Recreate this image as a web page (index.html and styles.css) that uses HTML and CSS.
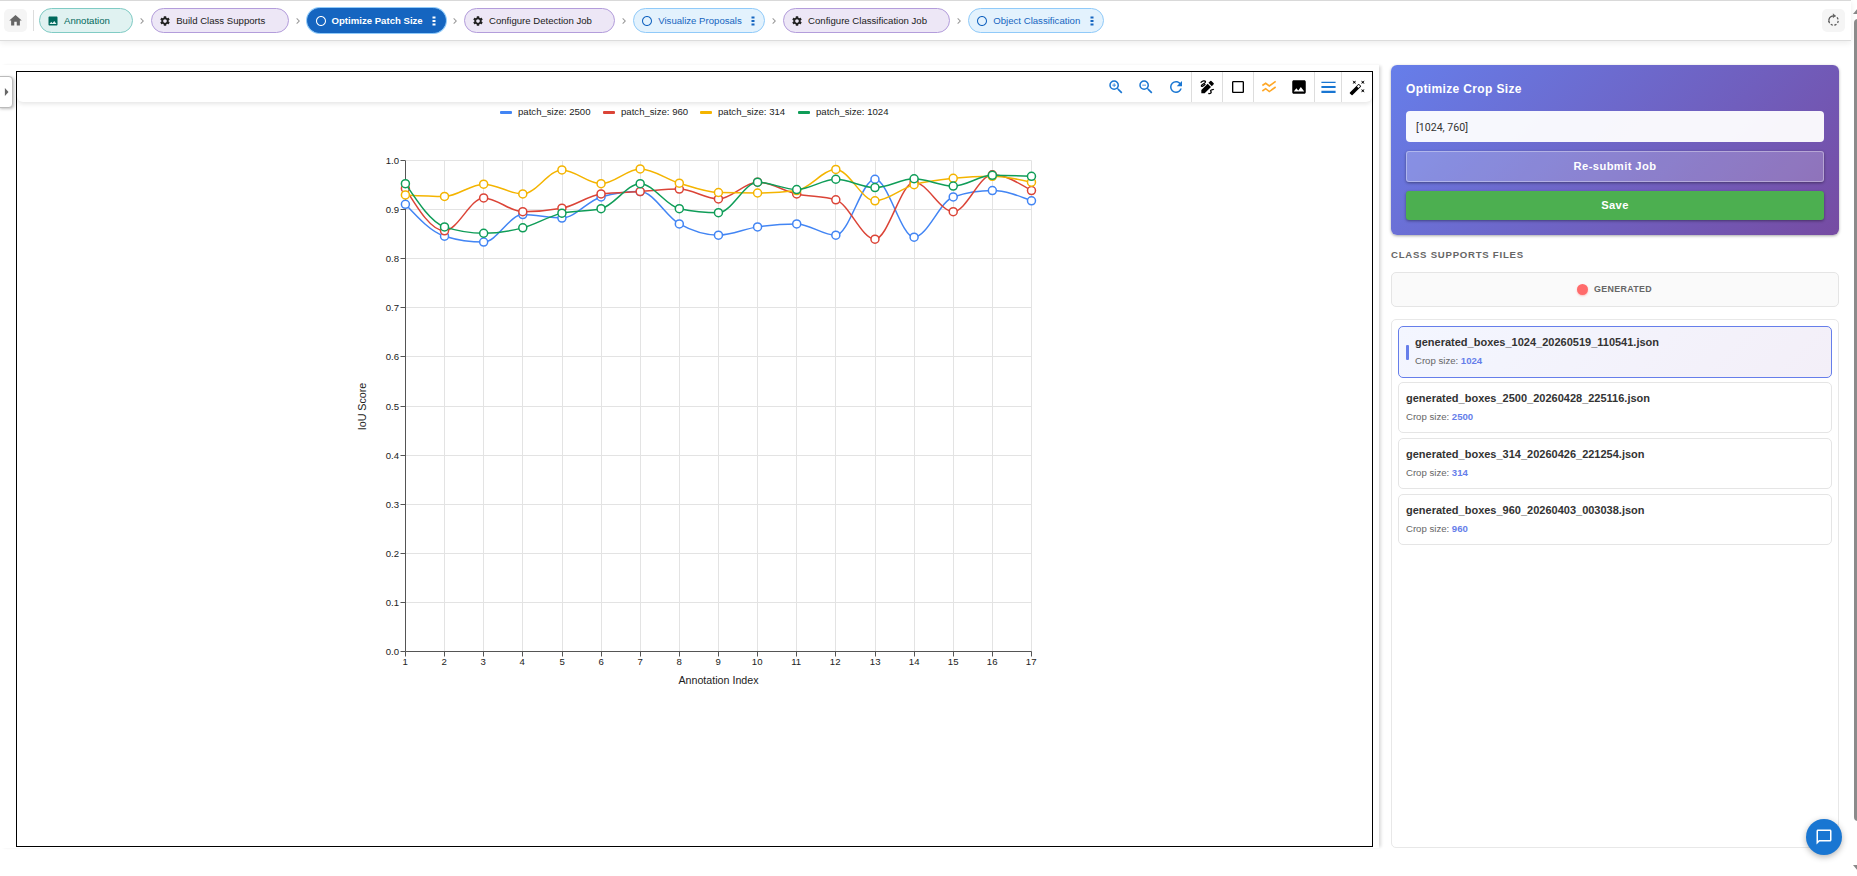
FILE: index.html
```
<!DOCTYPE html>
<html lang="en">
<head>
  <meta charset="UTF-8">
  <title>Optimize Patch Size</title>
  <link rel="stylesheet" href="styles.css">
</head>
<body>
  <!-- shared icons -->
  <svg class="sprite">
    <symbol id="i-gear" viewBox="0 0 24 24"><path d="M19.14 12.94c.04-.3.06-.61.06-.94 0-.32-.02-.64-.07-.94l2.03-1.58c.18-.14.23-.41.12-.61l-1.92-3.32c-.12-.22-.37-.29-.59-.22l-2.39.96c-.5-.38-1.03-.7-1.62-.94L14.4 2.81c-.04-.24-.24-.41-.48-.41h-3.84c-.24 0-.43.17-.47.41l-.36 2.54c-.59.24-1.13.57-1.62.94l-2.39-.96c-.22-.08-.47 0-.59.22L2.74 8.87c-.12.21-.08.47.12.61l2.03 1.58c-.05.3-.09.63-.09.94s.02.64.07.94l-2.03 1.58c-.18.14-.23.41-.12.61l1.92 3.32c.12.22.37.29.59.22l2.39-.96c.5.38 1.03.7 1.62.94l.36 2.54c.05.24.24.41.48.41h3.84c.24 0 .44-.17.47-.41l.36-2.54c.59-.24 1.13-.56 1.62-.94l2.39.96c.22.08.47 0 .59-.22l1.92-3.32c.12-.22.07-.47-.12-.61l-2.01-1.58zM12 15.6c-1.98 0-3.6-1.62-3.6-3.6s1.62-3.6 3.6-3.6 3.6 1.62 3.6 3.6-1.62 3.6-3.6 3.6z"/></symbol>
    <symbol id="i-circle" viewBox="0 0 24 24"><path d="M12 2C6.48 2 2 6.48 2 12s4.48 10 10 10 10-4.48 10-10S17.52 2 12 2zm0 18c-4.42 0-8-3.58-8-8s3.58-8 8-8 8 3.58 8 8-3.58 8-8 8z"/></symbol>
    <symbol id="i-image" viewBox="0 0 24 24"><path d="M21 19V5c0-1.1-.9-2-2-2H5c-1.1 0-2 .9-2 2v14c0 1.1.9 2 2 2h14c1.1 0 2-.9 2-2zM8.5 13.5l2.5 3.01L14.5 12l4.5 6H5l3.5-4.5z"/></symbol>
    <symbol id="i-dots" viewBox="0 0 4 12"><path d="M.5 1.500h3v2h-3zM.5 5h3v2h-3zM.5 8.500h3v2h-3z"/></symbol>
    <symbol id="i-chevron" viewBox="0 0 24 24"><path d="M10 6 8.59 7.41 13.17 12l-4.58 4.59L10 18l6-6z"/></symbol>
  </svg>

  <header class="topbar">
    <button class="icon-btn"><svg viewBox="0 0 24 24"><path d="M10 20v-6h4v6h5v-8h3L12 3 2 12h3v8z"/></svg></button>
    <span class="topbar-divider"></span>
    <nav class="steps">
      <a class="step step-annotation"><svg><use href="#i-image"/></svg><span>Annotation</span></a>
      <svg class="chevron"><use href="#i-chevron"/></svg>
      <a class="step step-job"><svg><use href="#i-gear"/></svg><span>Build Class Supports</span></a>
      <svg class="chevron"><use href="#i-chevron"/></svg>
      <a class="step step-active"><svg class="ring"><use href="#i-circle"/></svg><span>Optimize Patch Size</span><svg class="dots"><use href="#i-dots"/></svg></a>
      <svg class="chevron"><use href="#i-chevron"/></svg>
      <a class="step step-job"><svg><use href="#i-gear"/></svg><span>Configure Detection Job</span></a>
      <svg class="chevron"><use href="#i-chevron"/></svg>
      <a class="step step-view"><svg class="ring"><use href="#i-circle"/></svg><span>Visualize Proposals</span><svg class="dots"><use href="#i-dots"/></svg></a>
      <svg class="chevron"><use href="#i-chevron"/></svg>
      <a class="step step-job"><svg><use href="#i-gear"/></svg><span>Configure Classification Job</span></a>
      <svg class="chevron"><use href="#i-chevron"/></svg>
      <a class="step step-view"><svg class="ring"><use href="#i-circle"/></svg><span>Object Classification</span><svg class="dots"><use href="#i-dots"/></svg></a>
    </nav>
    <button class="icon-btn reload"><svg viewBox="0 0 24 24"><path class="dash" d="M12 4.5a7.5 7.5 0 1 1-7.2 5.4"/><path class="arc" d="M4.7 14a7.5 7.5 0 0 1 7.3-9.5"/><path d="M11 .5v8l4.5-4z"/></svg></button>
  </header>

  <button class="drawer-toggle"><svg viewBox="0 0 6 10"><path d="M1 0l4.500 5L1 10z"/></svg></button>

  <main class="workspace">
    <section class="viewer">
      <div class="viewer-frame">
        <div class="toolbar">
          <div class="tool-group blue">
            <svg viewBox="0 0 24 24"><path d="M15.5,14L20.5,19L19,20.5L14,15.5V14.71L13.73,14.43C12.59,15.41 11.11,16 9.5,16A6.5,6.5 0 0,1 3,9.5A6.5,6.5 0 0,1 9.5,3A6.5,6.5 0 0,1 16,9.5C16,11.11 15.41,12.59 14.43,13.73L14.71,14H15.5M9.5,14C12,14 14,12 14,9.5C14,7 12,5 9.5,5C7,5 5,7 5,9.5C5,12 7,14 9.5,14M12,10H10V12H9V10H7V9H9V7H10V9H12V10Z"/></svg>
            <svg viewBox="0 0 24 24"><path d="M15.5,14H14.71L14.43,13.73C15.41,12.59 16,11.11 16,9.5A6.5,6.5 0 0,0 9.5,3A6.5,6.5 0 0,0 3,9.5A6.5,6.5 0 0,0 9.5,16C11.11,16 12.59,15.41 13.73,14.43L14,14.71V15.5L19,20.5L20.5,19L15.5,14M9.5,14C7,14 5,12 5,9.5C5,7 7,5 9.5,5C12,5 14,7 14,9.5C14,12 12,14 9.5,14M7,9H12V10H7V9Z"/></svg>
            <svg viewBox="0 0 24 24"><path d="M17.65,6.35C16.2,4.9 14.21,4 12,4A8,8 0 0,0 4,12A8,8 0 0,0 12,20C15.73,20 18.84,17.45 19.73,14H17.65C16.83,16.33 14.61,18 12,18A6,6 0 0,1 6,12A6,6 0 0,1 12,6C13.66,6 15.14,6.69 16.22,7.78L13,11H20V4L17.65,6.35Z"/></svg>
          </div>
          <div class="tool-group">
            <svg viewBox="0 0 24 24"><path d="M3.500 21.500v-5L13 7l5 5-9.500 9.500zM14.200 5.800 17 3q.8-.8 1.600 0L22 6.400q.8.800 0 1.600l-2.800 2.800z"/><path class="squiggle" d="M2.500 5.500C5 2.500 9 1.800 9.800 4S3 8 3.500 10.300 7.500 9.500 9.500 7.500M14 21.500c2 .8 4.300.2 4.300-1.500s-2-2.500.2-3.500 2.500 0 3.500-1.500"/></svg>
          </div>
          <div class="tool-group">
            <svg viewBox="0 0 24 24"><path d="M19 3H5c-1.100 0-2 .9-2 2v14c0 1.100.9 2 2 2h14c1.100 0 2-.9 2-2V5c0-1.100-.9-2-2-2zm0 16H5V5h14z"/></svg>
          </div>
          <div class="tool-group wide">
            <svg viewBox="0 0 24 24"><path class="waves" d="M2 9.800 7 6.500 12.500 10.500 22 3.500M2 18l5-3.500 5.500 4.300L22 12"/></svg>
            <svg class="image-tool"><use href="#i-image"/></svg>
          </div>
          <div class="tool-group lines">
            <svg viewBox="0 0 24 24"><path d="M2 4h20v1.800H2zM2 10h20v2.800H2zM2 16.500h20v3.300H2z"/></svg>
          </div>
          <div class="tool-group wand">
            <svg viewBox="0 0 24 24"><path d="M7.5,5.6L5,7L6.4,4.5L5,2L7.5,3.4L10,2L8.6,4.5L10,7L7.5,5.6M19.5,15.4L22,14L20.6,16.5L22,19L19.5,17.6L17,19L18.4,16.5L17,14L19.5,15.4M22,2L20.6,4.5L22,7L19.5,5.6L17,7L18.4,4.5L17,2L19.5,3.4L22,2M13.34,12.78L15.78,10.34L13.66,8.22L11.22,10.66L13.34,12.78M14.37,7.29L16.71,9.63C17.1,10 17.1,10.65 16.71,11.04L5.04,22.71C4.65,23.1 4,23.1 3.63,22.71L1.29,20.37C0.9,20 0.9,19.35 1.29,18.96L12.96,7.29C13.35,6.9 14,6.9 14.37,7.29Z"/></svg>
          </div>
        </div>
        <svg id="chart" class="chart" viewBox="0 0 1355 744"></svg>
      </div>
    </section>

    <aside class="sidebar">
      <div class="crop-card">
        <h2>Optimize Crop Size</h2>
        <input type="text" value="[1024, 760]">
        <button class="btn btn-resubmit">Re-submit Job</button>
        <button class="btn btn-save">Save</button>
      </div>
      <h3>Class Supports Files</h3>
      <div class="tab"><span class="tab-dot"></span>GENERATED</div>
      <div class="file-list">
        <div class="file selected">
          <div class="file-name">generated_boxes_1024_20260519_110541.json</div>
          <div class="file-meta">Crop size: <b>1024</b></div>
        </div>
        <div class="file">
          <div class="file-name">generated_boxes_2500_20260428_225116.json</div>
          <div class="file-meta">Crop size: <b>2500</b></div>
        </div>
        <div class="file">
          <div class="file-name">generated_boxes_314_20260426_221254.json</div>
          <div class="file-meta">Crop size: <b>314</b></div>
        </div>
        <div class="file">
          <div class="file-name">generated_boxes_960_20260403_003038.json</div>
          <div class="file-meta">Crop size: <b>960</b></div>
        </div>
      </div>
    </aside>
  </main>

  <button class="chat-fab"><svg viewBox="0 0 24 24"><path d="M20 2H4c-1.100 0-2 .9-2 2v18l4-4h14c1.100 0 2-.9 2-2V4c0-1.100-.9-2-2-2zm0 14H5.200L4 17.200V4h16z"/></svg></button>

  <div class="scrollbar">
    <svg viewBox="0 0 10 6"><path d="M5 0l5 6H0z"/></svg>
    <span class="thumb"></span>
    <svg viewBox="0 0 10 6"><path d="M0 0h10L5 6z"/></svg>
  </div>

  <script src="chart.js"></script>
</body>
</html>
```
FILE: styles.css
```
* {
  box-sizing: border-box;
}

body, html {
  margin: 0;
  padding: 0;
  height: 100%;
  overflow: hidden;
}

body {
  display: flex;
  flex-direction: column;
  background-color: #fff;
  font-family: "Liberation Sans", Arial, sans-serif;
  color: #212121;
}

svg {
  fill: currentColor;
  flex: none;
}

.sprite {
  display: none;
}

button {
  border: none;
  padding: 0;
  font-family: inherit;
}

/* top bar */
.topbar {
  flex: none;
  height: 41px;
  margin-right: 6px;
  padding: 0 6px 0 4px;
  display: flex;
  align-items: center;
  border-top: 1px solid #d9d9d9;
  border-bottom: 1px solid #dcdcdc;
  box-shadow: 0 2px 6px rgba(0, 0, 0, 0.08);
}

.icon-btn {
  width: 23px;
  height: 23px;
  display: flex;
  align-items: center;
  justify-content: center;
  border-radius: 5px;
  background-color: #f5f5f5;
  color: #666;
}

.icon-btn svg {
  width: 15px;
  height: 15px;
}

.reload {
  margin-left: auto;
}

.reload .dash, .reload .arc {
  fill: none;
  stroke: #555;
  stroke-width: 2;
}

.reload .dash {
  stroke-dasharray: 3.5 2.5;
}

.topbar-divider {
  width: 1px;
  height: 21px;
  margin: 0 5px 0 6px;
  background-color: #ddd;
}

.steps {
  display: flex;
  align-items: center;
}

.step {
  height: 25px;
  padding: 0 22.3px 0 7px;
  display: flex;
  align-items: center;
  border: 1px solid;
  border-radius: 13px;
  font-size: 9.6px;
  white-space: nowrap;
  position: relative;
}

.step svg {
  width: 12px;
  height: 12px;
  margin-right: 5px;
}

.step span {
  margin-bottom: 1px;
}

.step .dots {
  position: absolute;
  right: 9px;
  top: 6px;
  width: 4px;
  height: 12px;
  margin: 0;
}

.step-annotation {
  background-color: #e0f2f1;
  border-color: #80cbc4;
  color: #00695c;
}

.step-job {
  background-color: #ede7f6;
  border-color: #b39ddb;
  color: #212121;
}

.step-view {
  background-color: #e3f2fd;
  border-color: #90caf9;
  color: #1565c0;
}

.step-active {
  background-color: #1565c0;
  border-color: #1565c0;
  color: #fff;
  font-weight: bold;
  box-shadow: 0 0 0 1px #90caf9;
}

.chevron {
  width: 12px;
  height: 12px;
  margin: 0 3px;
  color: #999;
}

.drawer-toggle {
  position: absolute;
  left: -1px;
  top: 76px;
  width: 14px;
  height: 32px;
  display: flex;
  align-items: center;
  justify-content: center;
  background-color: #fff;
  border: 1px solid #bbb;
  border-radius: 0 4px 4px 0;
  box-shadow: 1px 1px 3px rgba(0, 0, 0, 0.25);
  color: #666;
}

.drawer-toggle svg {
  width: 5px;
  height: 8px;
}

/* workspace */
.workspace {
  flex: 1;
  min-height: 0;
  padding: 24px 18px 28px 0;
  display: flex;
  gap: 12px;
}

.viewer {
  flex: 1;
  padding: 6px 6px 1px 16px;
  box-shadow: 3px 0 3px -1px rgba(0, 0, 0, 0.15);
}

.viewer-frame {
  height: 100%;
  display: flex;
  flex-direction: column;
  border: 1px solid #000;
}

.toolbar {
  flex: none;
  height: 30px;
  display: flex;
  justify-content: flex-end;
  border-radius: 6px;
  box-shadow: 0 2px 4px rgba(0, 0, 0, 0.1);
}

.tool-group {
  width: 31px;
  display: flex;
  align-items: center;
  justify-content: center;
  border-left: 1px solid #ddd;
  color: #000;
}

.tool-group svg {
  width: 16px;
  height: 16px;
}

.tool-group.blue {
  width: 91px;
  gap: 12px;
  border-left: none;
  color: #1976d2;
}

.tool-group.blue svg, .tool-group .image-tool {
  width: 18px;
  height: 18px;
}

.tool-group.wide {
  width: 61px;
  gap: 13px;
}

.tool-group.lines {
  width: 27px;
  color: #1976d2;
}

.tool-group.lines svg, .tool-group.wand svg {
  width: 17px;
  height: 17px;
}

.squiggle {
  fill: none;
  stroke: #000;
  stroke-width: 2;
}

.waves {
  fill: none;
  stroke: #ffa726;
  stroke-width: 2.4;
}

/* chart */
.chart {
  width: 100%;
  height: 744px;
  font-size: 9.6px;
}

.chart text {
  fill: #222;
}

.chart .grid {
  stroke: #e3e3e3;
}

.chart .axis {
  stroke: #555;
}

.chart .axis-name {
  font-size: 10.7px;
}

.chart .series {
  fill: none;
  stroke-width: 1.5;
}

.chart .marker {
  fill: #fff;
  stroke-width: 1.5;
}

/* sidebar */
.sidebar {
  width: 448px;
  display: flex;
  flex-direction: column;
}

.crop-card {
  height: 170px;
  padding: 15px;
  display: flex;
  flex-direction: column;
  gap: 9px;
  border-radius: 6px;
  background: linear-gradient(135deg, #667eea 0%, #764ba2 100%);
  box-shadow: 0 1px 3px rgba(0, 0, 0, 0.35);
}

.crop-card h2 {
  margin: 0 0 6px;
  height: 16px;
  line-height: 18px;
  font-size: 12px;
  letter-spacing: 0.36px;
  color: #fff;
}

.crop-card input {
  height: 31px;
  padding: 2px 10px 0;
  border: none;
  border-radius: 4px;
  background-color: rgba(255, 255, 255, 0.95);
  font-family: Roboto, sans-serif;
  font-size: 10.6px;
  color: #333;
}

.btn {
  padding-bottom: 2px;
  border-radius: 3px;
  font-size: 11.2px;
  font-weight: bold;
  letter-spacing: 0.4px;
  color: #fff;
  box-shadow: 0 1px 3px rgba(0, 0, 0, 0.4);
}

.btn-resubmit {
  height: 31px;
  background-color: rgba(255, 255, 255, 0.2);
  border: 1px solid rgba(255, 255, 255, 0.35);
}

.btn-save {
  height: 29px;
  background-color: #4caf50;
}

.sidebar h3 {
  margin: 12px 0 10px;
  line-height: 15px;
  font-size: 9.6px;
  letter-spacing: 0.75px;
  text-transform: uppercase;
  color: #666;
}

.tab {
  height: 35px;
  padding: 0 1px 2px 0;
  display: flex;
  align-items: center;
  justify-content: center;
  gap: 6px;
  border: 1px solid #e5e5e5;
  border-radius: 5px;
  background-color: #fafafa;
  font-size: 8.9px;
  font-weight: bold;
  letter-spacing: 0.3px;
  color: #666;
}

.tab-dot {
  width: 11px;
  height: 11px;
  margin-top: 2px;
  border-radius: 50%;
  background-color: #ff6b6b;
  box-shadow: 0 1px 2px rgba(255, 107, 107, 0.4);
}

.file-list {
  flex: 1;
  margin-top: 12px;
  padding: 6px;
  display: flex;
  flex-direction: column;
  gap: 4.3px;
  border: 1px solid #e8e8e8;
  border-radius: 5px;
}

.file {
  height: 51.6px;
  padding: 8px 7px;
  border: 1px solid #e5e5e5;
  border-radius: 5px;
  position: relative;
}

.file-name {
  line-height: 15px;
  font-size: 11px;
  font-weight: bold;
  color: #333;
}

.file-meta {
  margin-top: 4px;
  line-height: 14px;
  font-size: 9.6px;
  color: #666;
}

.file-meta b {
  color: #667eea;
}

.file.selected {
  padding-left: 16px;
  border-color: #667eea;
  background: linear-gradient(135deg, #f3f6ff 0%, #f3eff8 100%);
}

.file.selected::before {
  content: "";
  position: absolute;
  left: 7px;
  top: 18px;
  width: 3px;
  height: 15px;
  border-radius: 1px;
  background-color: #667eea;
}

.chat-fab {
  position: fixed;
  right: 15px;
  bottom: 21px;
  width: 36px;
  height: 36px;
  display: flex;
  align-items: center;
  justify-content: center;
  border-radius: 50%;
  background-color: #1976d2;
  color: #fff;
  box-shadow: 0 2px 6px rgba(0, 0, 0, 0.3);
}

.chat-fab svg {
  width: 18px;
  height: 18px;
}

.scrollbar {
  position: fixed;
  top: 8px;
  right: -6px;
  bottom: 5px;
  width: 10px;
  display: flex;
  flex-direction: column;
  color: #888;
}

.scrollbar svg {
  width: 10px;
  height: 6px;
}

.scrollbar .thumb {
  flex: 1;
  margin: 5px 0 44px 1px;
  border-radius: 4px;
  background-color: #8b8b8b;
}
```
FILE: chart.js
```
const NS = 'http://www.w3.org/2000/svg';
const chart = document.getElementById('chart');

// plot area
const LEFT = 388.5;
const TOP = 58.5;
const STEP = 39.13;
const HEIGHT = 491;

const series = [
  { name: 'patch_size: 2500', color: '#4285f4', legendX: 483,
    data: [.910, .845, .833, .889, .882, .925, .936, .870, .847, .864, .870, .847, .961, .843, .925, .938, .917] },
  { name: 'patch_size: 960', color: '#db4437', legendX: 586,
    data: [.942, .856, .923, .895, .902, .931, .936, .941, .921, .955, .931, .919, .839, .955, .895, .970, .938] },
  { name: 'patch_size: 314', color: '#f4b400', legendX: 683,
    data: [.929, .926, .951, .931, .980, .952, .982, .953, .934, .933, .938, .981, .917, .950, .963, .967, .955] },
  { name: 'patch_size: 1024', color: '#0f9d58', legendX: 781,
    data: [.952, .864, .851, .862, .892, .901, .952, .901, .893, .955, .940, .961, .944, .962, .947, .969, .967] }
];

function add(tag, attrs, text) {
  const el = document.createElementNS(NS, tag);
  for (const key in attrs) el.setAttribute(key, attrs[key]);
  if (text !== undefined) el.textContent = text;
  chart.appendChild(el);
}

function line(x1, y1, x2, y2, cls) {
  add('line', { x1, y1, x2, y2, class: cls });
}

// monotone cubic through evenly spaced points
function smoothPath(pts) {
  const n = pts.length;
  const slopes = [];
  for (let i = 0; i < n - 1; i++) slopes.push((pts[i + 1][1] - pts[i][1]) / STEP);
  const m = pts.map((p, i) => {
    if (i === 0 || i === n - 1) return null;
    const a = slopes[i - 1], b = slopes[i];
    return (Math.sign(a) + Math.sign(b)) * Math.min(Math.abs(a), Math.abs(b), Math.abs(a + b) / 4) || 0;
  });
  m[0] = (3 * slopes[0] - m[1]) / 2;
  m[n - 1] = (3 * slopes[n - 2] - m[n - 2]) / 2;
  let d = `M${pts[0][0]},${pts[0][1]}`;
  for (let i = 1; i < n; i++) {
    const dx = STEP / 3;
    d += `C${pts[i - 1][0] + dx},${pts[i - 1][1] + m[i - 1] * dx} ${pts[i][0] - dx},${pts[i][1] - m[i] * dx} ${pts[i][0]},${pts[i][1]}`;
  }
  return d;
}

const right = Math.round(LEFT + STEP * 16) - 0.5;
const bottom = TOP + HEIGHT;

for (let i = 0; i <= 10; i++) {
  const y = Math.floor(TOP + HEIGHT * i / 10) + 0.5;
  line(LEFT, y, right, y, 'grid');
  line(LEFT - 5, y, LEFT, y, 'axis');
  add('text', { x: LEFT - 6.5, y: y + 3.5, 'text-anchor': 'end' }, (1 - i / 10).toFixed(1));
}
for (let i = 0; i <= 16; i++) {
  const x = Math.floor(LEFT - 0.2 + STEP * i + 0.2) + 0.5;
  line(x, TOP, x, bottom, 'grid');
  line(x, bottom, x, bottom + 5, 'axis');
  add('text', { x: x - 0.3, y: bottom + 13.5, 'text-anchor': 'middle' }, i + 1);
}
line(LEFT, TOP, LEFT, bottom, 'axis');
line(LEFT, bottom, right, bottom, 'axis');

add('text', { x: 701.5, y: 582, 'text-anchor': 'middle', class: 'axis-name' }, 'Annotation Index');
add('text', { transform: 'translate(349 304.5) rotate(-90)', 'text-anchor': 'middle', class: 'axis-name' }, 'IoU Score');

series.forEach(s => {
  const pts = s.data.map((v, i) => [LEFT - 0.1 + STEP * i, TOP - 0.4 + (1 - v) * HEIGHT]);
  add('path', { d: smoothPath(pts), stroke: s.color, class: 'series' });
  pts.forEach(p => add('circle', { cx: p[0], cy: p[1], r: 4, stroke: s.color, class: 'marker' }));
  add('rect', { x: s.legendX, y: 9, width: 12, height: 3, rx: 1, fill: s.color });
  add('text', { x: s.legendX + 18, y: 12.8 }, s.name);
});
```
